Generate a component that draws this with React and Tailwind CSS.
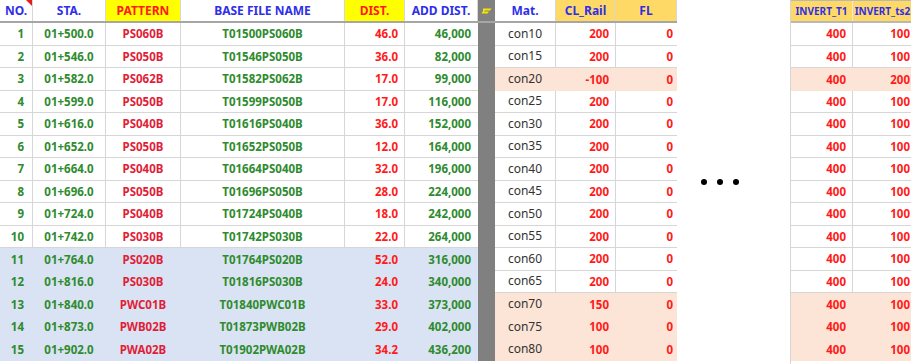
import React from "react";

const rows = [
  ["1", "01+500.0", "PS060B", "T01500PS060B", "46.0", "46,000", "con10", "200", "0", "400", "100"],
  ["2", "01+546.0", "PS050B", "T01546PS050B", "36.0", "82,000", "con15", "200", "0", "400", "100"],
  ["3", "01+582.0", "PS062B", "T01582PS062B", "17.0", "99,000", "con20", "-100", "0", "400", "200"],
  ["4", "01+599.0", "PS050B", "T01599PS050B", "17.0", "116,000", "con25", "200", "0", "400", "100"],
  ["5", "01+616.0", "PS040B", "T01616PS040B", "36.0", "152,000", "con30", "200", "0", "400", "100"],
  ["6", "01+652.0", "PS050B", "T01652PS050B", "12.0", "164,000", "con35", "200", "0", "400", "100"],
  ["7", "01+664.0", "PS040B", "T01664PS040B", "32.0", "196,000", "con40", "200", "0", "400", "100"],
  ["8", "01+696.0", "PS050B", "T01696PS050B", "28.0", "224,000", "con45", "200", "0", "400", "100"],
  ["9", "01+724.0", "PS040B", "T01724PS040B", "18.0", "242,000", "con50", "200", "0", "400", "100"],
  ["10", "01+742.0", "PS030B", "T01742PS030B", "22.0", "264,000", "con55", "200", "0", "400", "100"],
  ["11", "01+764.0", "PS020B", "T01764PS020B", "52.0", "316,000", "con60", "200", "0", "400", "100"],
  ["12", "01+816.0", "PS030B", "T01816PS030B", "24.0", "340,000", "con65", "200", "0", "400", "100"],
  ["13", "01+840.0", "PWC01B", "T01840PWC01B", "33.0", "373,000", "con70", "150", "0", "400", "100"],
  ["14", "01+873.0", "PWB02B", "T01873PWB02B", "29.0", "402,000", "con75", "100", "0", "400", "100"],
  ["15", "01+902.0", "PWA02B", "T01902PWA02B", "34.2", "436,200", "con80", "100", "0", "400", "100"],
];

const pinkRows = new Set([2, 12, 13, 14]);

const font = { fontFamily: '"Noto Sans", "Open Sans", sans-serif' };

function Cell({ w, align = "center", className = "", lines = true, children }) {
  const al = align === "right" ? "justify-end pr-[6px]" : "justify-center";
  return (
    <div
      className={`flex items-center shrink-0 h-full ${al} ${lines ? "border-r border-[#d6d6d6]" : "border-r border-transparent"} ${className}`}
      style={{ width: w }}
    >
      {children}
    </div>
  );
}

function HeadCell({ w, bg = "bg-white", color = "text-[#2f2fe8]", className = "", children }) {
  return (
    <div
      className={`relative flex items-center justify-center shrink-0 h-full border-r border-[#d6d6d6] ${bg} ${color} ${className}`}
      style={{ width: w }}
    >
      {children}
    </div>
  );
}

export default function App() {
  return (
    <div className="w-[911px] h-[364px] bg-white overflow-hidden flex text-[11.5px] font-bold" style={font}>
      {/* Left table */}
      <div className="flex flex-col w-[677px] shrink-0">
        <div className="flex h-[23px] border-b-2 border-[#a6a6a6] text-[12px]">
          <HeadCell w={33}>
            NO.
            <span className="absolute top-0 right-0 w-0 h-0 border-t-[6px] border-t-[#e02020] border-l-[6px] border-l-transparent" />
          </HeadCell>
          <HeadCell w={73}>STA.</HeadCell>
          <HeadCell w={75} bg="bg-[#ffff00]" color="text-[#ff1a1a]">PATTERN</HeadCell>
          <HeadCell w={164}>BASE FILE NAME</HeadCell>
          <HeadCell w={60} bg="bg-[#ffff00]" color="text-[#ff1a1a]">DIST.</HeadCell>
          <HeadCell w={73}>ADD DIST.</HeadCell>
          <div className="w-[17px] shrink-0 h-full bg-[#808080] flex items-center justify-center">
            <svg width="11" height="6" viewBox="0 0 11 6">
              <path d="M2 0.5 H10.5 L9 2.5 H4 L3 3.5 H8 L6.5 5.5 H0.5 L2 3 Z" fill="#f5e600" />
            </svg>
          </div>
          <HeadCell w={61}>Mat.</HeadCell>
          <HeadCell w={60} bg="bg-[#ffd966]">CL_Rail</HeadCell>
          <HeadCell w={61} bg="bg-[#ffd966]">FL</HeadCell>
        </div>
        {rows.map((r, i) => {
          const blue = i >= 10;
          const pink = pinkRows.has(i);
          return (
            <div key={i} className="flex h-[22.5px]">
              <div
                className={`flex h-full ${blue ? "bg-[#dae3f3]" : "bg-white border-b border-[#d6d6d6]"}`}
              >
                <Cell w={33} align="right" lines={!blue} className="text-[#2e8b2e] !pr-[8px]">{r[0]}</Cell>
                <Cell w={73} lines={!blue} className="text-[#2e8b2e]">{r[1]}</Cell>
                <Cell w={75} lines={!blue} className="text-[#e01e37]">{r[2]}</Cell>
                <Cell w={164} lines={!blue} className="text-[#2e8b2e]">{r[3]}</Cell>
                <Cell w={60} align="right" lines={!blue} className="text-[#ff1a1a]">{r[4]}</Cell>
                <Cell w={73} align="right" lines={false} className="text-[#2e8b2e]">{r[5]}</Cell>
              </div>
              <div className="w-[17px] shrink-0 h-full bg-[#808080]" />
              <div className={`flex h-full ${pink ? "bg-[#fce4d6]" : "bg-white border-b border-[#d6d6d6]"}`}>
                <Cell w={61} lines={!pink} className="text-[#333333] font-normal text-[12px]">{r[6]}</Cell>
                <Cell w={60} align="right" lines={!pink} className="text-[#ff1a1a]">{r[7]}</Cell>
                <Cell w={61} align="right" lines={false} className="text-[#ff1a1a] !pr-[3px]">{r[8]}</Cell>
              </div>
            </div>
          );
        })}
      </div>

      {/* Gap with ellipsis */}
      <div className="w-[113px] shrink-0 flex items-start">
        <div className="mt-[179px] ml-[24px] flex gap-[10px]">
          <span className="w-[6px] h-[6px] rounded-full bg-black" />
          <span className="w-[6px] h-[6px] rounded-full bg-black" />
          <span className="w-[6px] h-[6px] rounded-full bg-black" />
        </div>
      </div>

      {/* Right table */}
      <div className="flex flex-col w-[121px] shrink-0 border-l border-[#d6d6d6]">
        <div className="flex h-[23px] border-b-2 border-t border-[#b8b8b8] bg-[#ffd966] text-[10px] text-[#2f2fe8]">
          <div className="w-[62px] shrink-0 h-full flex items-center justify-center border-r border-[#e8e8e8]">INVERT_T1</div>
          <div className="w-[59px] shrink-0 h-full flex items-center justify-center">INVERT_ts2</div>
        </div>
        {rows.map((r, i) => {
          const pink = pinkRows.has(i);
          return (
            <div
              key={i}
              className={`flex h-[22.5px] text-[#ff1a1a] ${pink ? "bg-[#fce4d6]" : "bg-white border-b border-[#d6d6d6]"}`}
            >
              <div className={`w-[62px] shrink-0 h-full flex items-center justify-end pr-[6px] border-r ${pink ? "border-transparent" : "border-[#d6d6d6]"}`}>{r[9]}</div>
              <div className="w-[59px] shrink-0 h-full flex items-center justify-end pr-[2px]">{r[10]}</div>
            </div>
          );
        })}
      </div>
    </div>
  );
}
